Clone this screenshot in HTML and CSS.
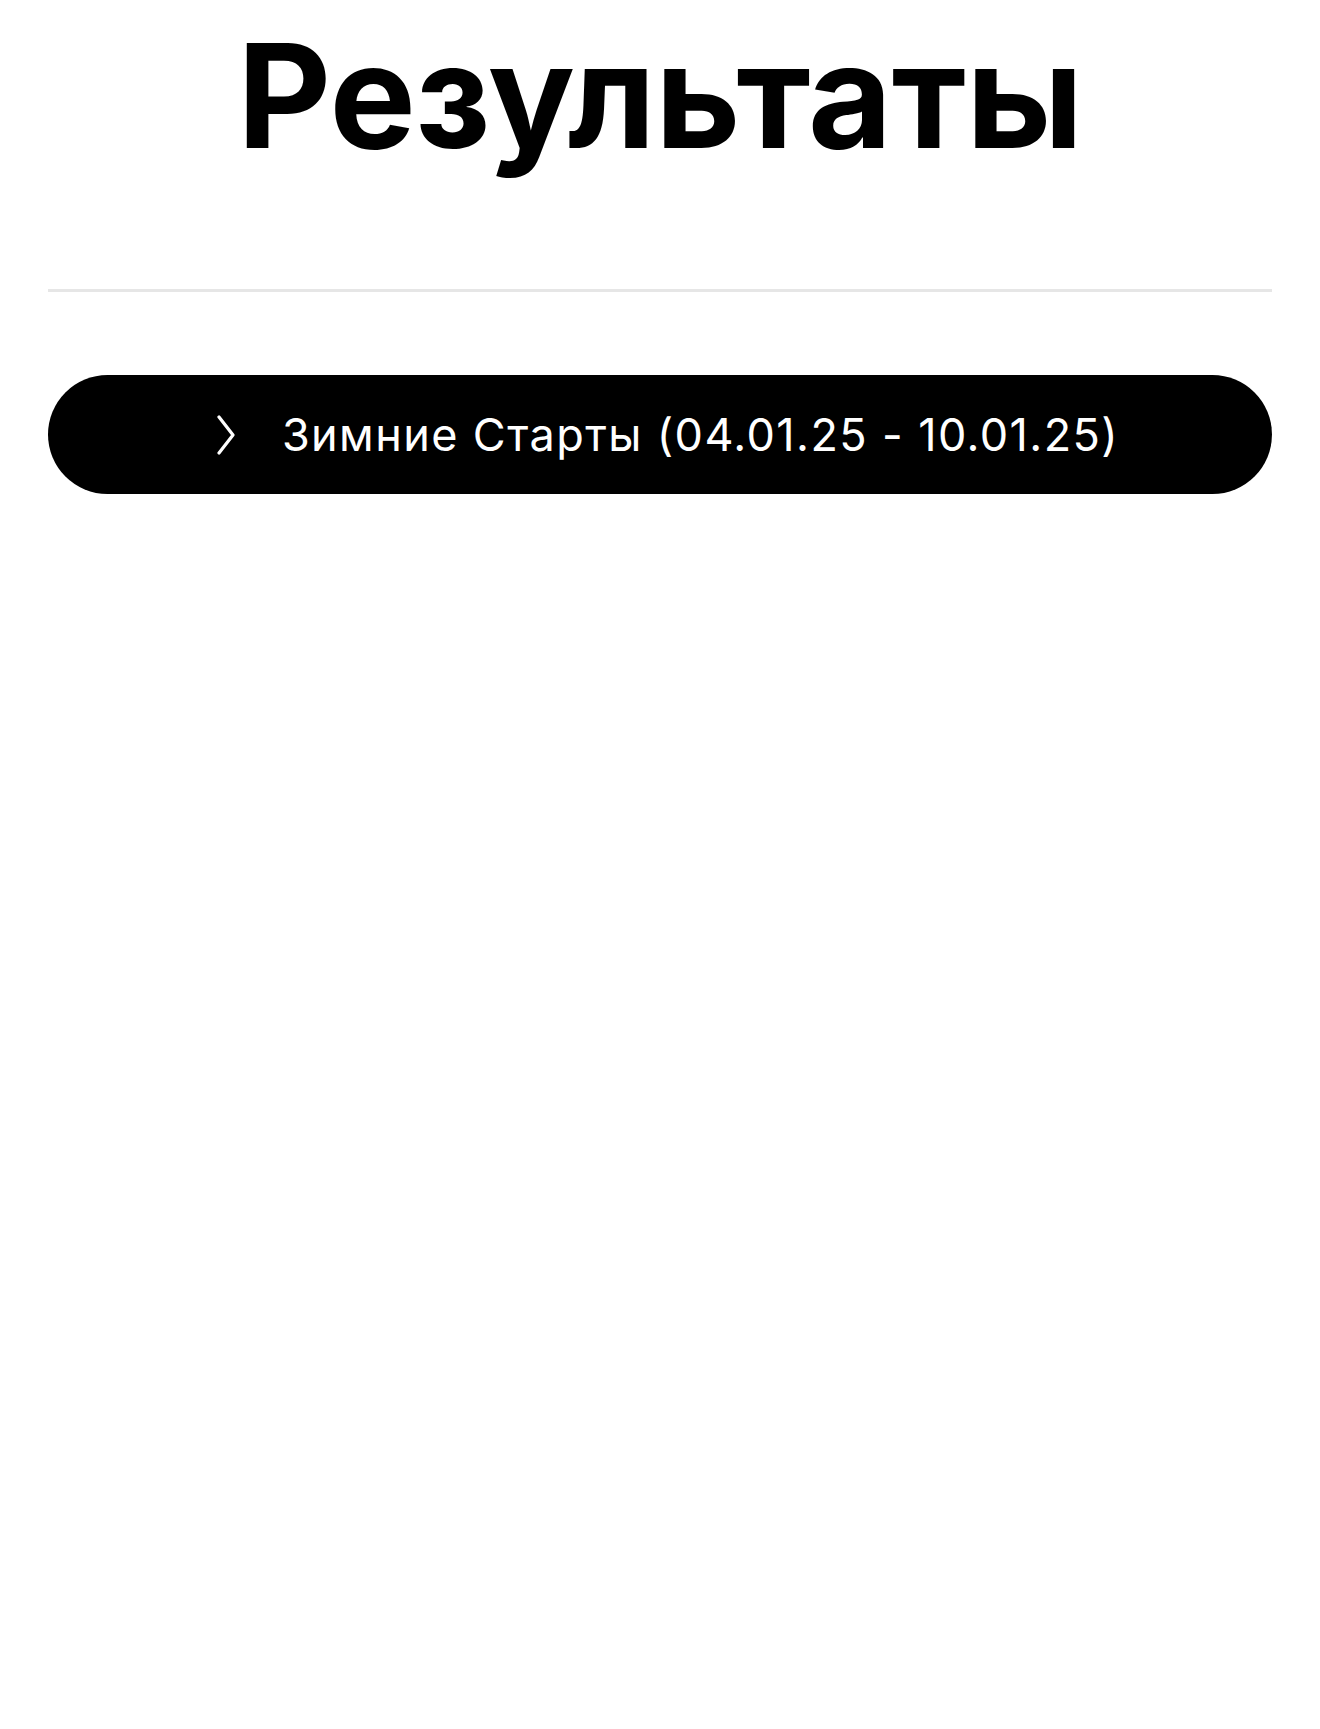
FILE: index.html
```html
<!DOCTYPE html>
<html lang="ru">
<head>
<meta charset="utf-8">
<link rel="stylesheet" href="styles.css">
</head>
<body>
<main class="page">
  <h1 class="title">Результаты</h1>
  <hr class="divider">
  <button class="event">
    <svg class="chevron" width="20" height="40" viewBox="0 0 20 40"><path d="M3 2 L17 20 L3 38" fill="none" stroke="#fff" stroke-width="3.2" stroke-linecap="round" stroke-linejoin="round"/></svg>
    <span class="event-label">Зимние Старты (04.01.25 - 10.01.25)</span>
  </button>
</main>
</body>
</html>
```
FILE: styles.css
```css
html, body {
  margin: 0;
  padding: 0;
  background: #fff;
}
.page {
  padding: 0 48px;
  font-family: Inter, "Noto Sans", sans-serif;
}
.title {
  margin: 0;
  padding-top: 16px;
  font-size: 145px;
  font-weight: 700;
  line-height: 160px;
  text-align: center;
  color: #000;
  letter-spacing: -0.5px;
}
.divider {
  margin: 113px 0 0;
  border: 0;
  height: 3px;
  background: #e6e6e6;
}
.event {
  margin-top: 83px;
  width: 100%;
  height: 119px;
  border: 0;
  border-radius: 60px;
  background: #000;
  color: #fff;
  display: flex;
  align-items: center;
  justify-content: center;
  gap: 46px;
  font-family: inherit;
  padding: 0 0 0 15px;
}
.chevron {
  display: block;
}
.event-label {
  font-size: 45px;
  font-weight: 400;
  letter-spacing: 1.4px;
}
```
